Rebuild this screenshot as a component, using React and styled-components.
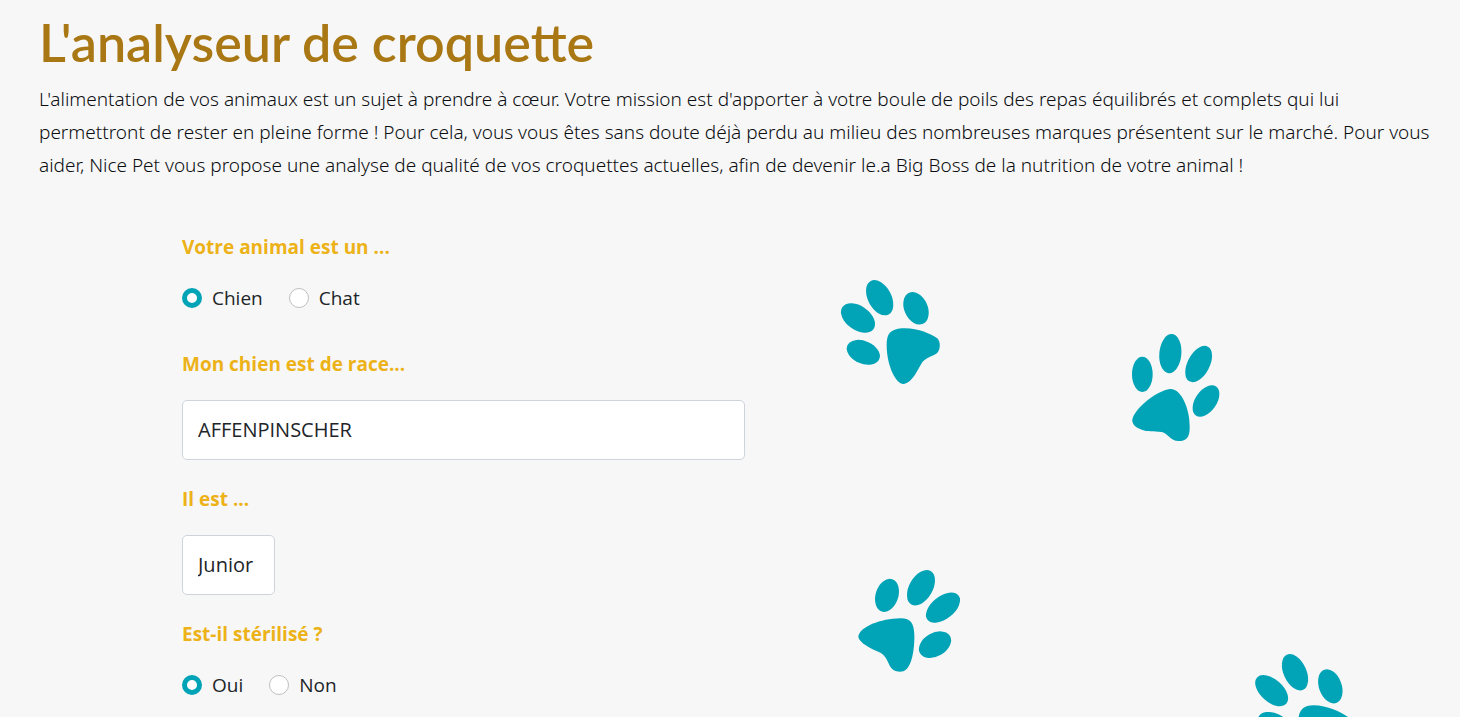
import React from "react";
import styled, { createGlobalStyle } from "styled-components";

const teal = "#00a4b6";

const GlobalStyle = createGlobalStyle`
  *, *::before, *::after { box-sizing: border-box; }
  body {
    margin: 0;
    background: #f7f7f7;
    color: #212529;
    font-family: "Open Sans", "Noto Sans", sans-serif;
    font-size: 19px;
    line-height: 32px;
  }
`;

const Page = styled.main`
  height: 100vh;
  min-height: 700px;
  overflow: hidden;
  display: flex;
  flex-direction: column;
`;

const Intro = styled.header`
  padding: 12px 8px 0 39px;
`;

const Title = styled.h1`
  margin: 0 0 11px;
  color: #a97814;
  font-family: Lato, sans-serif;
  font-size: 52px;
  font-weight: 600;
  line-height: 60px;
`;

const Lead = styled.p`
  margin: 0;
  color: #0b0d10;
  font-family: "Noto Sans", "Open Sans", sans-serif;
  font-weight: 300;
  line-height: 33px;
`;

const Content = styled.section`
  flex: 1;
  display: grid;
  grid-template-columns: minmax(0, 563fr) minmax(0, 715fr);
  padding: 50px 0 0 182px;
`;

const Form = styled.form`
  display: flex;
  flex-direction: column;
  align-items: stretch;
  gap: 24px;
`;

const Group = styled.fieldset`
  margin: 0;
  padding: 0 0 12px;
  border: 0;
  min-width: 0;
`;

const Legend = styled.legend`
  padding: 0;
  margin-bottom: 21px;
  color: #ecb218;
  font-size: 19px;
  font-weight: 700;
  line-height: 30px;
`;

const Choices = styled.div`
  display: flex;
  gap: 26px;
`;

const Choice = styled.label`
  display: flex;
  align-items: center;
  gap: 10px;
  line-height: 30px;
`;

const Radio = styled.input.attrs({ type: "radio" })`
  appearance: none;
  width: 20px;
  height: 20px;
  margin: 0;
  border: 1px solid #bfbfbf;
  border-radius: 50%;
  background: #fff;

  &:checked {
    border: 5px solid ${teal};
  }
`;

const Field = styled.div`
  display: flex;
  flex-direction: column;
  align-items: flex-start;
  gap: 21px;
`;

const FieldLabel = styled.label`
  color: #ecb218;
  font-weight: 700;
  line-height: 30px;
`;

const Select = styled.select`
  appearance: none;
  width: ${({ $wide }) => ($wide ? "100%" : "auto")};
  height: 60px;
  padding: 0 20px 0 15px;
  border: 1px solid #ced4da;
  border-radius: 5px;
  background: #fff;
  color: inherit;
  font: inherit;
  font-size: 20px;
`;

const PawField = styled.div`
  position: relative;
`;

const PawSvg = styled.svg`
  position: absolute;
  left: ${({ $x }) => $x}px;
  top: ${({ $y }) => $y}px;
  fill: ${teal};
`;

const paws = [
  {
    x: 85,
    y: 38,
    toes: [
      [149, 83, 35, 57, -28],
      [84, 144, 36, 57, -55],
      [258, 115, 35, 51, -24],
      [100, 247, 34, 52, -67],
    ],
    pad: "M170 225C170 190 182 178 215 175C260 172 300 190 322 205C332 215 332 238 322 248C312 258 285 262 275 280C262 300 250 335 222 342C200 345 170 290 170 225Z",
  },
  {
    x: 375,
    y: 93,
    toes: [
      [67, 148, 31, 53, 0],
      [151, 86, 33, 59, 5],
      [236, 117, 33, 59, 28],
      [258, 228, 32, 53, 35],
    ],
    pad: "M150 192C185 190 210 255 209 305C210 335 200 348 176 348C150 348 145 325 125 321C100 318 80 322 60 312C40 305 34 290 38 280C50 245 110 198 150 192Z",
  },
  {
    x: 105,
    y: 328,
    toes: [
      [111, 106, 34, 51, 18],
      [213, 83, 35, 58, 30],
      [279, 143, 34, 59, 52],
      [255, 254, 35, 52, 60],
    ],
    pad: "M150 175C182 174 192 190 193 225C194 270 185 325 160 334C140 338 125 330 118 315C110 298 105 285 88 277C62 266 30 250 25 232C26 200 95 176 150 175Z",
  },
  {
    x: 500,
    y: 413,
    toes: [
      [150, 82, 34, 58, -25],
      [80, 137, 34, 59, -48],
      [256, 124, 34, 53, -20],
      [87, 239, 34, 52, -64],
    ],
    pad: "M160 230C160 200 172 181 205 181C250 181 290 203 312 218C322 228 320 248 308 258C290 268 272 274 264 292C254 316 242 342 218 346C190 346 162 290 160 230Z",
  },
];

function Paw({ x, y, toes, pad }) {
  return (
    <PawSvg $x={x} $y={y} width="120" height="120" viewBox="0 0 360 360" aria-hidden="true">
      {toes.map(([cx, cy, rx, ry, angle]) => (
        <ellipse
          key={`${cx}-${cy}`}
          cx={cx}
          cy={cy}
          rx={rx}
          ry={ry}
          transform={`rotate(${angle} ${cx} ${cy})`}
        />
      ))}
      <path d={pad} />
    </PawSvg>
  );
}

function RadioGroup({ legend, name, options }) {
  return (
    <Group>
      <Legend>{legend}</Legend>
      <Choices>
        {options.map((option, index) => (
          <Choice key={option}>
            <Radio name={name} value={option} defaultChecked={index === 0} />
            {option}
          </Choice>
        ))}
      </Choices>
    </Group>
  );
}

function SelectField({ id, label, value, wide }) {
  return (
    <Field>
      <FieldLabel htmlFor={id}>{label}</FieldLabel>
      <Select id={id} $wide={wide} defaultValue={value}>
        <option>{value}</option>
      </Select>
    </Field>
  );
}

export default function App() {
  return (
    <Page>
      <GlobalStyle />
      <Intro>
        <Title>L'analyseur de croquette</Title>
        <Lead>
          L'alimentation de vos animaux est un sujet à prendre à cœur. Votre mission est
          d'apporter à votre boule de poils des repas équilibrés et complets qui lui
          <br />
          permettront de rester en pleine forme ! Pour cela, vous vous êtes sans doute déjà
          perdu au milieu des nombreuses marques présentent sur le marché. Pour vous aider,
          Nice Pet vous propose une analyse de qualité de vos croquettes actuelles, afin de
          devenir le.a Big Boss de la nutrition de votre animal !
        </Lead>
      </Intro>
      <Content>
        <Form>
          <RadioGroup legend="Votre animal est un ..." name="animal" options={["Chien", "Chat"]} />
          <SelectField id="race" label="Mon chien est de race..." value="AFFENPINSCHER" wide />
          <SelectField id="age" label="Il est ..." value="Junior" />
          <RadioGroup legend="Est-il stérilisé ?" name="sterilise" options={["Oui", "Non"]} />
        </Form>
        <PawField>
          {paws.map((paw) => (
            <Paw key={`${paw.x}-${paw.y}`} {...paw} />
          ))}
        </PawField>
      </Content>
    </Page>
  );
}
